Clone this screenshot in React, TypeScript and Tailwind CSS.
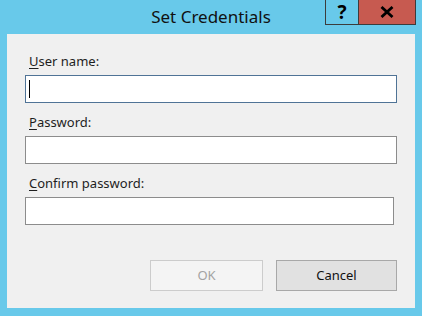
import { useState } from 'react'

// Windows 8 style "Set Credentials" dialog
function Field({ label, accel, rest, focused, inputClass }: { label: string; accel: string; rest: string; focused?: boolean; inputClass?: string }) {
  const [value, setValue] = useState('')
  return (
    <div className="flex flex-col">
      <label className="pl-1 text-[13px] leading-[16px] text-[#1e1e1e]" aria-label={label}>
        <span className="underline underline-offset-2">{accel}</span>
        {rest}
      </label>
      <div className={`relative mt-[6px] h-[28px] border bg-white ${focused ? 'border-[#4f7396]' : 'border-[#8c8c8c]'} ${inputClass ?? ''}`}>
        <input
          value={value}
          onChange={(e) => setValue(e.target.value)}
          className="h-full w-full bg-transparent px-[3px] text-[13px] outline-none"
          type={label.includes('assword') ? 'password' : 'text'}
        />
        {focused && value === '' && (
          <span className="pointer-events-none absolute left-[3px] top-[4px] h-[18px] w-px bg-black" />
        )}
      </div>
    </div>
  )
}

export default function App() {
  return (
    <div
      className="flex h-[316px] w-[422px] flex-col bg-[#68c9ea]"
      style={{ fontFamily: '"Noto Sans", "Open Sans", sans-serif' }}
    >
      {/* Title bar */}
      <div className="grid h-[34px] grid-cols-[1fr_auto_1fr]">
        <div />
        <div className="pt-[6px] text-[17px] leading-[22px] text-[#111]">Set Credentials</div>
        <div className="flex justify-end pr-[6px]">
          <div className="flex h-[25px] border border-t-0 border-[#3c3c3c]">
            <div className="flex w-[33px] items-center justify-center border-r border-[#3c3c3c] text-[19px] font-bold leading-none text-black">
              ?
            </div>
            <div className="flex w-[56px] items-center justify-center bg-[#c75a50]">
              <svg width="14" height="12" viewBox="0 0 14 12">
                <path d="M1.5 1 L12.5 11 M12.5 1 L1.5 11" stroke="#000" strokeWidth="2.8" />
              </svg>
            </div>
          </div>
        </div>
      </div>

      {/* Client area */}
      <div className="mx-[7px] flex h-[274px] flex-col bg-[#f0f0f0] px-[18px] pt-[19px]">
        <div className="flex flex-col gap-[11px]">
          <Field label="User name:" accel="U" rest="ser name:" focused />
          <Field label="Password:" accel="P" rest="assword:" />
          <Field label="Confirm password:" accel="C" rest="onfirm password:" inputClass="mr-[3px]" />
        </div>

        <div className="mt-auto mb-[17px] flex justify-end gap-[13px]">
          <button
            disabled
            className="h-[31px] w-[113px] border border-[#cccccc] bg-[#f4f4f4] text-[13px] text-[#a3a3a3]"
          >
            OK
          </button>
          <button className="h-[31px] w-[121px] border border-[#a8a8a8] bg-[#e1e1e1] text-[13px] text-[#111]">
            Cancel
          </button>
        </div>
      </div>
    </div>
  )
}
